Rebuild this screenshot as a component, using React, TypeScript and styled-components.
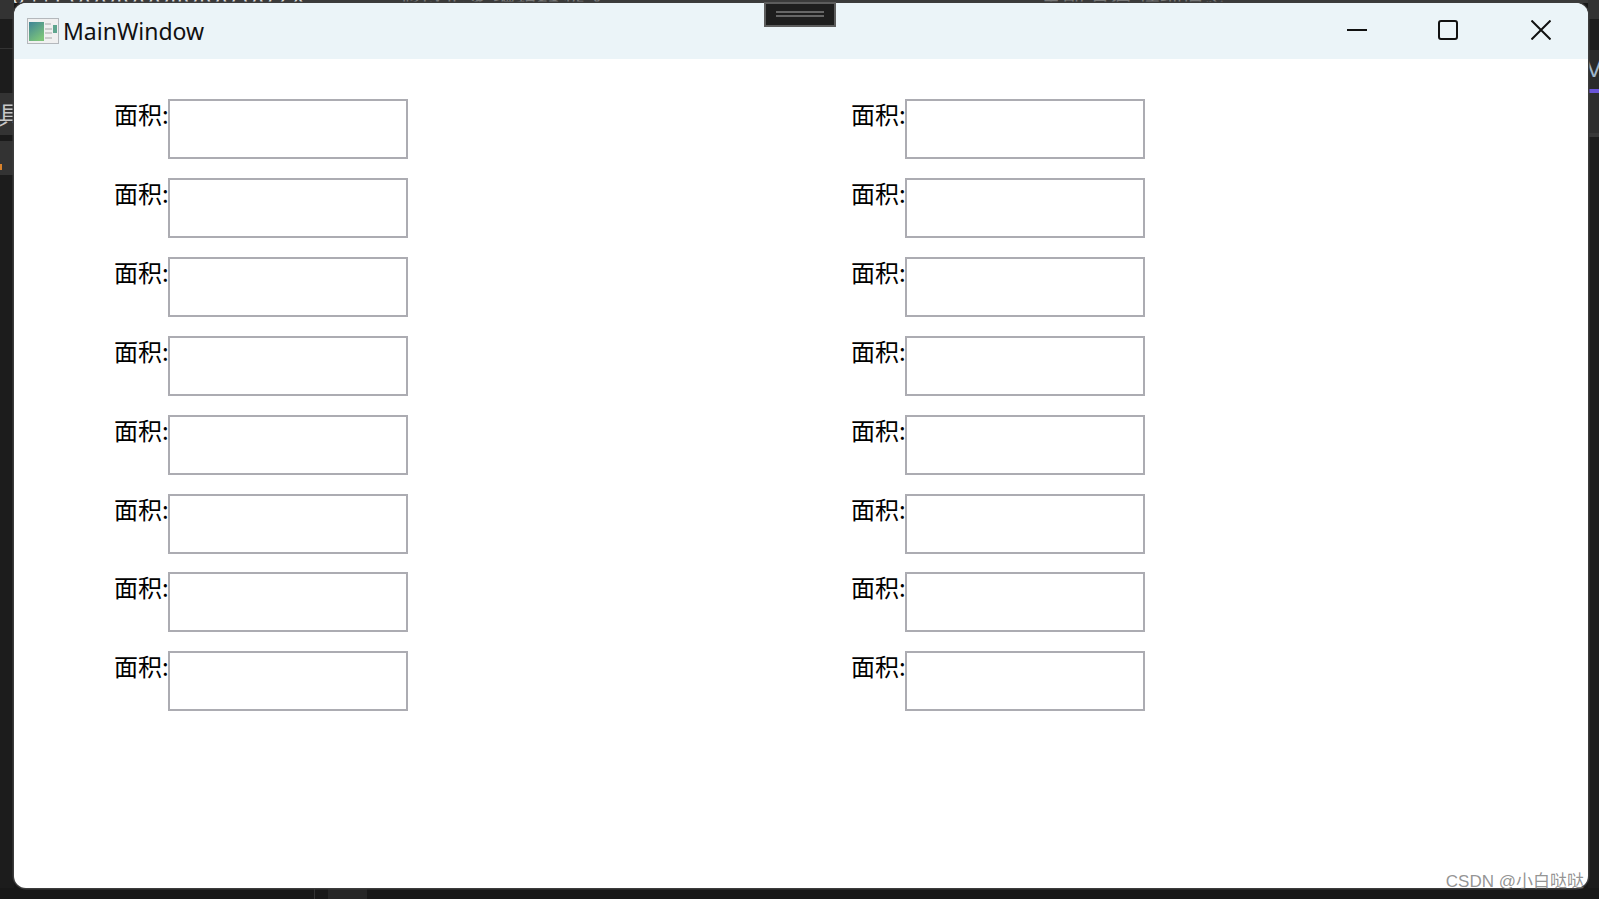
import styled, { createGlobalStyle } from "styled-components";

const Global = createGlobalStyle`
  html, body {
    margin: 0;
    padding: 0;
    height: 100%;
    overflow: hidden;
    background: #181818;
  }
`;

const Desktop = styled.div`
  width: 1599px;
  height: 899px;
  display: grid;
  grid-template-columns: 14px 1574px 11px;
  grid-template-rows: 3px 885px 11px;
  background: #181818;
  position: relative;
  overflow: hidden;
`;

const TopStrip = styled.div`
  grid-column: 1 / 4;
  height: 3px;
  background: #3a3a3a;
  overflow: hidden;
  display: flex;
`;

const StripText = styled.div<{ $w: number; $color: string }>`
  width: ${(p) => p.$w}px;
  flex: none;
  margin-top: -17px;
  font: 22px/24px "Noto Sans CJK SC", "Liberation Sans", sans-serif;
  color: ${(p) => p.$color};
  white-space: nowrap;
`;

const LeftGutter = styled.div`
  display: flex;
  flex-direction: column;
  background: #1c1c1c;
  color: #c8c8c8;
  overflow: hidden;
  margin-top: -3px;
`;

const Band = styled.div<{ $h: number; $tone: string }>`
  height: ${(p) => p.$h}px;
  background: ${(p) => p.$tone};
  flex: none;
  overflow: hidden;
`;

const GutterGlyph = styled.div`
  font: 24px/42px "Noto Sans CJK SC", sans-serif;
  margin-left: -2px;
`;

const OrangeMark = styled.div`
  width: 2px;
  height: 6px;
  margin-top: 23px;
  background: #d9822b;
`;

const RightGutter = styled.div`
  display: flex;
  flex-direction: column;
  background: #1c1c1c;
  overflow: hidden;
  margin-top: -3px;
`;

const VGlyph = styled.div`
  font: 24px/27px "Liberation Sans", sans-serif;
  color: #9fb4c8;
  margin: 5px 0 0 -2px;
`;

const Window = styled.div`
  display: flex;
  flex-direction: column;
  background: #fff;
  border-radius: 12px;
  overflow: hidden;
  position: relative;
  box-shadow: 0 0 0 1.5px #3c3c3c;
`;

const TitleBar = styled.div`
  height: 56px;
  flex: none;
  background: #ebf4f8;
  display: flex;
  align-items: center;
  padding: 0 0 0 13px;
  font: 23px "Noto Sans", "Liberation Sans", sans-serif;
  color: #111;
`;

const AppIcon = styled.svg`
  width: 32px;
  height: 26px;
  margin-right: 4px;
  flex: none;
`;

const Caption = styled.span`
  flex: 1;
`;

const Controls = styled.div`
  display: flex;
  align-items: center;
  height: 100%;
  padding-bottom: 2px;
  box-sizing: border-box;
`;

const ControlButton = styled.div<{ $w: number }>`
  width: ${(p) => p.$w}px;
  display: flex;
  justify-content: center;
`;

const ControlIcon = styled.svg`
  width: 20px;
  height: 20px;
  display: block;
  fill: none;
  stroke: #111;
  stroke-width: 2;
`;

const Content = styled.div`
  display: grid;
  grid-template-columns: repeat(2, 737px);
  padding: 40px 0 0 100px;
`;

const Column = styled.div`
  display: flex;
  flex-direction: column;
  gap: 19px;
`;

const Field = styled.div<{ $tight?: boolean }>`
  display: flex;
  align-items: flex-start;
  margin-top: ${(p) => (p.$tight ? -1 : 0)}px;
`;

const Label = styled.label`
  width: 54px;
  font: 24px/30px "Noto Sans CJK SC", "Liberation Sans", sans-serif;
  color: #000;
  white-space: nowrap;
`;

const Input = styled.div`
  width: 240px;
  height: 60px;
  box-sizing: border-box;
  border: 2px solid #acacb2;
  background: #fff;
`;

const SnapHandle = styled.div`
  position: absolute;
  left: 764px;
  top: 2px;
  width: 72px;
  height: 25px;
  box-sizing: border-box;
  border: 2px solid #5c5c5c;
  background: #1e1e1e;
  display: flex;
  flex-direction: column;
  align-items: center;
  padding-top: 7px;
  gap: 2px;
`;

const HandleLine = styled.div`
  width: 48px;
  height: 2px;
  background: #666;
`;

const BottomStrip = styled.div`
  grid-column: 1 / 4;
  display: flex;
  padding-left: 314px;
  background: #181818;
`;

const BottomTick = styled.div`
  width: 1px;
  background: #333;
  margin-right: 13px;
`;

const BottomTab = styled.div`
  width: 39px;
  background: #262626;
`;

const Watermark = styled.div`
  position: absolute;
  right: 15px;
  bottom: 7px;
  font: 17px/20px "Liberation Sans", "Noto Sans CJK SC", sans-serif;
  color: rgba(120, 120, 120, 0.8);
  white-space: nowrap;
`;

const rows = Array.from({ length: 8 }, (_, i) => i);

const FieldColumn = () => (
  <Column>
    {rows.map((r) => (
      <Field key={r} $tight={r === 6}>
        <Label>面积:</Label>
        <Input />
      </Field>
    ))}
  </Column>
);

export default function App() {
  return (
    <>
      <Global />
      <Desktop>
        <TopStrip>
          <StripText $w={400} $color="#d8d8d8">+0 行1 UUUIUUUIIUIUU UU ZX</StripText>
          <StripText $w={640} $color="#777">修改记录 编辑器 提交</StripText>
          <StripText $w={250} $color="#777">全部 查看 详细信息</StripText>
        </TopStrip>
        <LeftGutter>
          <Band $h={19} $tone="#333" />
          <Band $h={29} $tone="#1c1c1c" />
          <Band $h={1} $tone="#333" />
          <Band $h={44} $tone="#1c1c1c" />
          <Band $h={42} $tone="#333">
            <GutterGlyph>具</GutterGlyph>
          </Band>
          <Band $h={6} $tone="#1a1a1a" />
          <Band $h={34} $tone="#333">
            <OrangeMark />
          </Band>
        </LeftGutter>
        <Window>
          <TitleBar>
            <AppIcon viewBox="0 0 32 26">
              <defs>
                <linearGradient id="pane" x1="0" y1="0" x2="0.6" y2="1">
                  <stop offset="0" stopColor="#3f8497" />
                  <stop offset="1" stopColor="#7cc47a" />
                </linearGradient>
              </defs>
              <rect x="0.5" y="0.5" width="31" height="25" fill="#f0f0f0" stroke="#b4b8bc" />
              <rect x="2" y="4" width="15" height="19" fill="url(#pane)" />
              <rect x="18" y="5" width="6" height="2" fill="#ccc" />
              <rect x="18" y="10" width="7" height="2" fill="#ccc" />
              <rect x="18" y="14" width="7" height="2" fill="#ccc" />
              <rect x="18" y="19" width="7" height="2" fill="#ccc" />
              <rect x="26" y="7" width="4" height="8" fill="#5fa58e" />
            </AppIcon>
            <Caption>MainWindow</Caption>
            <Controls>
              <ControlButton $w={90}>
                <ControlIcon viewBox="0 0 20 20">
                  <path d="M0 10h20" />
                </ControlIcon>
              </ControlButton>
              <ControlButton $w={92}>
                <ControlIcon viewBox="0 0 20 20">
                  <rect x="1" y="1" width="18" height="18" rx="2" />
                </ControlIcon>
              </ControlButton>
              <ControlButton $w={94}>
                <ControlIcon viewBox="0 0 20 20">
                  <path d="M0.5 0.5l19 19M19.5 0.5l-19 19" />
                </ControlIcon>
              </ControlButton>
            </Controls>
          </TitleBar>
          <Content>
            <FieldColumn />
            <FieldColumn />
          </Content>
        </Window>
        <RightGutter>
          <Band $h={19} $tone="#333" />
          <Band $h={31} $tone="#1c1c1c" />
          <Band $h={39} $tone="#2a2a2a">
            <VGlyph>V</VGlyph>
          </Band>
          <Band $h={4} $tone="#6a55d8" />
          <Band $h={40} $tone="#2e2e2e" />
          <Band $h={4} $tone="#383838" />
        </RightGutter>
        <BottomStrip>
          <BottomTick />
          <BottomTab />
        </BottomStrip>
        <SnapHandle>
          <HandleLine />
          <HandleLine />
        </SnapHandle>
        <Watermark>CSDN @小白哒哒</Watermark>
      </Desktop>
    </>
  );
}
